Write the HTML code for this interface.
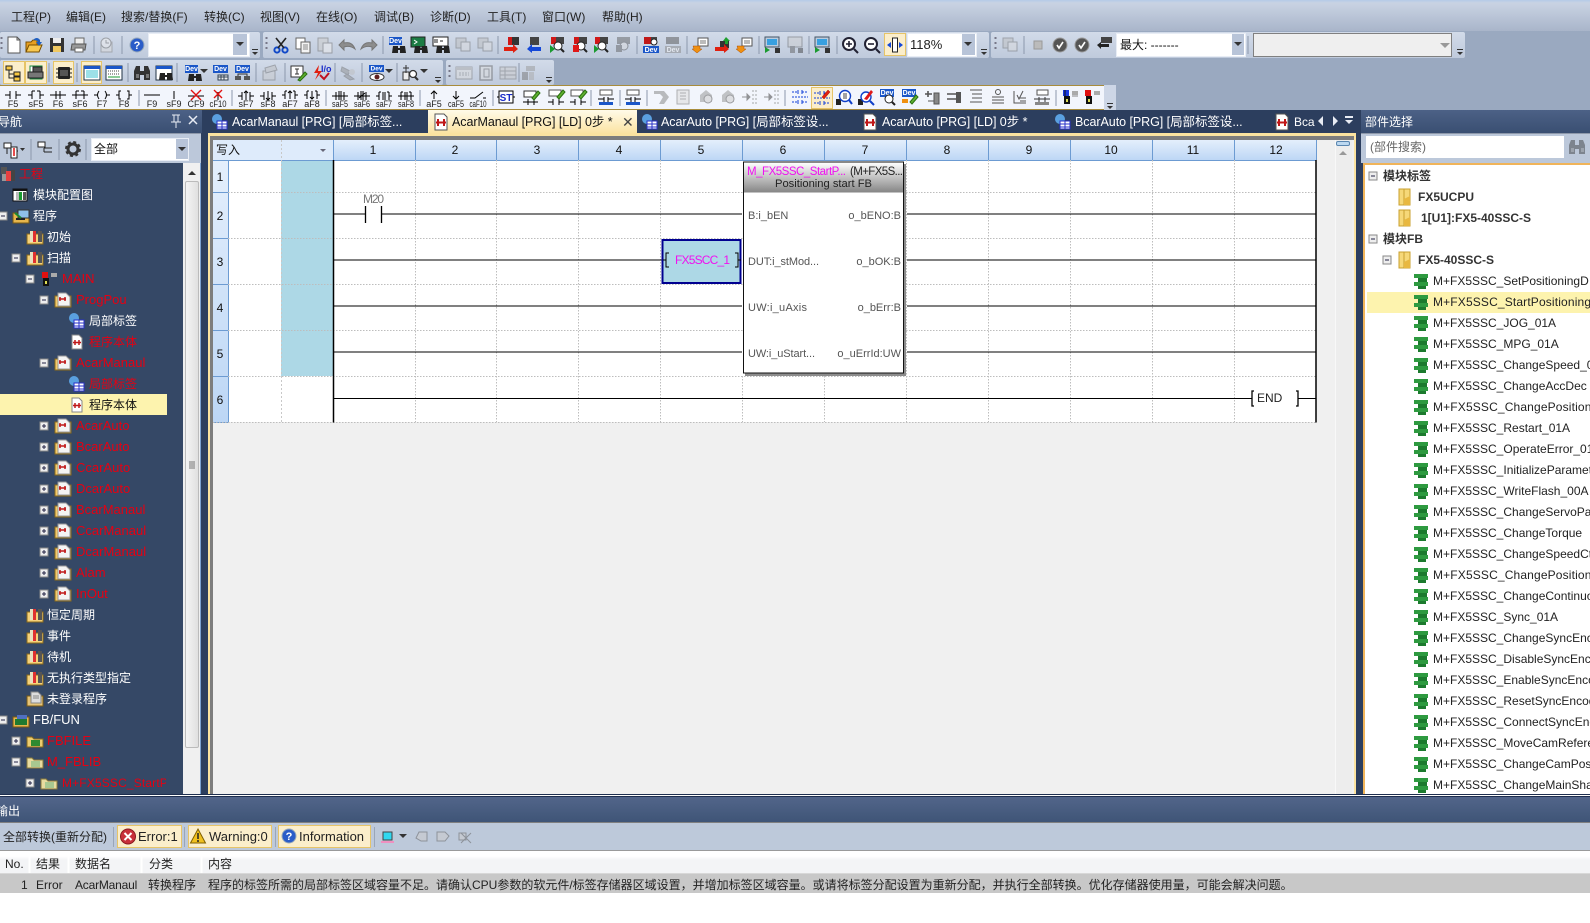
<!DOCTYPE html>
<html><head><meta charset="utf-8"><style>
html,body{margin:0;padding:0;width:1590px;height:923px;overflow:hidden;background:#9aa9c0}
body{position:relative;font:12px/16px "Liberation Sans","Noto Sans CJK SC",sans-serif;color:#111}
div{position:absolute;white-space:nowrap}
svg{position:absolute;left:0;top:0}
.m{top:9px;color:#222}
.band{background:linear-gradient(#d2dbe9,#bfcadc);border-radius:2px}
.combo{background:#fff;border:1px solid #e8edf5}
.arr{background:#b8c4d8}
.sel{background:#fbeecb;border:1px solid #e6c468;box-sizing:border-box}
.tab{top:114px;color:#fff;font-size:12.5px;letter-spacing:-.05px}
.t{color:#fff;font-size:12px}
.r{color:#e60012}
.la{font-size:13px}
.g{color:#222;font-size:12px;left:1433px}
.b{color:#333;font-weight:bold;font-size:12px}
.h{top:856px;color:#222}
.w{top:877px;color:#222}
text{font-family:"Liberation Sans","Noto Sans CJK SC",sans-serif}
.lb{font-size:9px;text-anchor:middle;fill:#222}
</style></head><body>
<!-- top chrome -->
<div style="left:0;top:0;width:1590px;height:31px;background:linear-gradient(#b5cbe8 0,#c9d3e3 3px,#a9b5ca 100%)"></div>
<div class="m" style="left:11px">工程(P)</div><div class="m" style="left:66px">编辑(E)</div><div class="m" style="left:121px">搜索/替换(F)</div><div class="m" style="left:204px">转换(C)</div><div class="m" style="left:260px">视图(V)</div><div class="m" style="left:316px">在线(O)</div><div class="m" style="left:374px">调试(B)</div><div class="m" style="left:430px">诊断(D)</div><div class="m" style="left:487px">工具(T)</div><div class="m" style="left:542px">窗口(W)</div><div class="m" style="left:602px">帮助(H)</div>
<!-- toolbar bands -->
<div class="band" style="left:0;top:32px;width:260px;height:26px"></div>
<div class="band" style="left:263px;top:32px;width:726px;height:26px"></div>
<div class="band" style="left:991px;top:32px;width:474px;height:26px"></div>
<div class="band" style="left:0;top:60px;width:443px;height:25px"></div>
<div class="band" style="left:446px;top:60px;width:108px;height:25px"></div>
<div class="combo" style="left:148px;top:33px;width:100px;height:22px"></div><div class="arr" style="left:233px;top:34px;width:14px;height:21px"></div>
<div class="combo" style="left:907px;top:33px;width:68px;height:22px;font-size:13px;line-height:22px;text-indent:2px;color:#222">118%</div><div class="arr" style="left:962px;top:34px;width:13px;height:21px"></div>
<div class="combo" style="left:1116px;top:33px;width:128px;height:22px;line-height:22px;text-indent:3px;color:#111">最大: -------</div><div class="arr" style="left:1232px;top:34px;width:12px;height:21px"></div>
<div style="left:1253px;top:33px;width:197px;height:22px;background:#efefef;border:1px solid #808080"></div>
<div style="left:0;top:85px;width:1115px;height:25px;background:#f2f5fc;border-top:1px solid #a88c3c;border-bottom:1px solid #a88c3c;box-sizing:border-box"></div>
<div style="left:1104px;top:85px;width:12px;height:25px;background:#cdd6e6"></div>
<!-- selected buttons -->
<div class="sel" style="left:3px;top:61px;width:22px;height:23px"></div><div class="sel" style="left:25px;top:61px;width:22px;height:23px"></div><div class="sel" style="left:53px;top:61px;width:21px;height:23px"></div><div class="sel" style="left:81px;top:61px;width:21px;height:23px"></div>
<div class="sel" style="left:884px;top:33px;width:22px;height:23px"></div><div class="sel" style="left:811px;top:87px;width:22px;height:22px"></div>
<!-- title strip -->
<div style="left:0;top:110px;width:1590px;height:685px;background:#2c3e5e"></div>
<div style="left:0;top:110px;width:202px;height:23px;background:linear-gradient(#4c6186,#3a4f72)"></div>
<div class="t" style="left:0;top:114px;width:22px;overflow:hidden;direction:rtl">导航</div>
<div style="left:1361px;top:110px;width:229px;height:23px;background:linear-gradient(#4c6186,#3a4f72)"></div>
<div class="t" style="left:1365px;top:114px">部件选择</div>
<!-- tabs -->
<div style="left:428px;top:110px;width:209px;height:24px;background:linear-gradient(#fffbe8,#fbe3a0)"></div>
<div class="tab" style="left:232px">AcarManaul [PRG] [局部标签...</div>
<div class="tab" style="left:452px;color:#111">AcarManaul [PRG] [LD] 0步 *</div>
<div class="tab" style="left:622px;color:#444;font-size:14px">✕</div>
<div class="tab" style="left:661px">AcarAuto [PRG] [局部标签设...</div>
<div class="tab" style="left:882px">AcarAuto [PRG] [LD] 0步 *</div>
<div class="tab" style="left:1075px">BcarAuto [PRG] [局部标签设...</div>
<div class="tab" style="left:1294px;font-size:12px">Bca</div>
<!-- left pane -->
<div style="left:0;top:133px;width:201px;height:30px;background:#bcc8da;border-top:1px solid #8d98aa;box-sizing:border-box"></div>
<div class="combo" style="left:91px;top:138px;width:96px;height:21px;line-height:21px;text-indent:2px">全部</div><div class="arr" style="left:176px;top:139px;width:12px;height:20px"></div>
<div style="left:0;top:163px;width:201px;height:632px;background:#354866"></div>
<div style="left:183px;top:163px;width:17px;height:632px;background:#f0f0f0;border-right:1px solid #7aa0d0"></div>
<div style="left:185px;top:181px;width:14px;height:567px;background:linear-gradient(90deg,#f4f4f4,#e0e0e0);border:1px solid #bbb;box-sizing:border-box;border-radius:2px"></div>
<div style="left:0;top:394px;width:167px;height:21px;background:#fdf3ae"></div>
<div style="left:0;top:1px">
<div class="t r" style="left:19px;top:165px">工程</div>
<div class="t" style="left:33px;top:186px">模块配置图</div>
<div class="t" style="left:33px;top:207px">程序</div>
<div class="t" style="left:47px;top:228px">初始</div>
<div class="t" style="left:47px;top:249px">扫描</div>
<div class="t r la" style="left:62px;top:270px">MAIN</div>
<div class="t r la" style="left:76px;top:291px">ProgPou</div>
<div class="t" style="left:89px;top:312px">局部标签</div>
<div class="t r" style="left:89px;top:333px">程序本体</div>
<div class="t r la" style="left:76px;top:354px">AcarManaul</div>
<div class="t r" style="left:89px;top:375px">局部标签</div>
<div class="t" style="left:89px;top:396px;color:#111">程序本体</div>
<div class="t r la" style="left:76px;top:417px">AcarAuto</div>
<div class="t r la" style="left:76px;top:438px">BcarAuto</div>
<div class="t r la" style="left:76px;top:459px">CcarAuto</div>
<div class="t r la" style="left:76px;top:480px">DcarAuto</div>
<div class="t r la" style="left:76px;top:501px">BcarManaul</div>
<div class="t r la" style="left:76px;top:522px">CcarManaul</div>
<div class="t r la" style="left:76px;top:543px">DcarManaul</div>
<div class="t r la" style="left:76px;top:564px">Alam</div>
<div class="t r la" style="left:76px;top:585px">InOut</div>
<div class="t" style="left:47px;top:606px">恒定周期</div>
<div class="t" style="left:47px;top:627px">事件</div>
<div class="t" style="left:47px;top:648px">待机</div>
<div class="t" style="left:47px;top:669px">无执行类型指定</div>
<div class="t" style="left:47px;top:690px">未登录程序</div>
<div class="t la" style="left:33px;top:711px">FB/FUN</div>
<div class="t r la" style="left:47px;top:732px">FBFILE</div>
<div class="t r la" style="left:47px;top:753px">M_FBLIB</div>
<div class="t r" style="left:62px;top:774px;width:104px;overflow:hidden;letter-spacing:.15px">M+FX5SSC_StartPositioning</div>
</div>
<!-- editor -->
<div style="left:208px;top:133px;width:1148px;height:662px;background:#f0f0f0;border-left:2px solid #fbe3a0;border-right:2px solid #fbe3a0;box-sizing:border-box"></div>
<div style="left:208px;top:133px;width:1148px;height:3px;background:#fbe3a0"></div>
<div style="left:210px;top:136px;width:1144px;height:4px;background:#7d7d7d"></div>
<div style="left:210px;top:136px;width:3px;height:659px;background:#7d7d7d"></div>
<div style="left:1335px;top:140px;width:16px;height:655px;background:#ededed;border-left:1px solid #f8f8f8"></div>
<div style="left:1336px;top:141px;width:14px;height:5px;background:#bcd8f0;border:1px solid #5a86b0;border-radius:2px;box-sizing:border-box"></div>
<div style="left:213px;top:140px;width:1103px;height:282px;background:#fff"></div>
<div style="left:281px;top:160px;width:52px;height:216px;background:#add8e6"></div>
<svg width="1590" height="923" viewBox="0 0 1590 923">
<defs>
<linearGradient id="hg" x1="0" y1="0" x2="0" y2="1"><stop offset="0" stop-color="#e4effc"/><stop offset="1" stop-color="#bcd6f5"/></linearGradient>
<linearGradient id="fg" x1="0" y1="0" x2="0" y2="1"><stop offset="0" stop-color="#fff"/><stop offset="1" stop-color="#858585"/></linearGradient>
<!-- toolbar icons -->
<g id="doc"><path d="M-6-8H3L6-5V8H-6Z" fill="#fff" stroke="#555"/><path d="M3-8V-5H6" fill="none" stroke="#555"/></g>
<g id="open"><path d="M-8 7V-3H-3L-1-5H3V7Z" fill="#e8a020" stroke="#7a5000"/><path d="M-8 7L-5 0H8L5 7Z" fill="#f8c850" stroke="#7a5000"/><path d="M-1-5Q3-9 6-5V-3H8L5 1 2-3H4Q3-5-1-5Z" fill="#1f5fc0"/></g>
<g id="save"><rect x="-7" y="-7" width="14" height="14" fill="#333"/><rect x="-4" y="-7" width="8" height="5" fill="#eee"/><rect x="-4" y="1" width="8" height="6" fill="#f0c860"/></g>
<g id="print"><rect x="-4" y="-7" width="9" height="6" fill="#eee" stroke="#666"/><path d="M-7-1H7L6 5H-8Z" fill="#999" stroke="#555"/><rect x="-4" y="3" width="8" height="4" fill="#fff" stroke="#666"/></g>
<g id="clk" opacity=".55"><rect x="-6" y="-3" width="11" height="10" fill="#ddd" stroke="#888"/><circle cx="-1" cy="-2" r="5" fill="#eee" stroke="#777"/><path d="M-1-5V-2H2" fill="none" stroke="#777"/></g>
<g id="help"><circle r="7" fill="#2a5cc8" stroke="#9ab"/><text y="4" text-anchor="middle" font-size="11" font-weight="bold" fill="#fff">?</text></g>
<g id="cut"><circle cx="-4" cy="5" r="2.6" fill="none" stroke="#1048c8" stroke-width="2"/><circle cx="4" cy="5" r="2.6" fill="none" stroke="#1048c8" stroke-width="2"/><path d="M-5-7L3 3M5-7L-3 3" stroke="#222" stroke-width="1.6"/></g>
<g id="copy"><rect x="-7" y="-7" width="9" height="11" fill="#fff" stroke="#666"/><rect x="-2" y="-3" width="9" height="11" fill="#f4f4f4" stroke="#666"/><path d="M0 0H5M0 2H5M0 4H5" stroke="#888"/></g>
<g id="paste" opacity=".55"><rect x="-7" y="-7" width="10" height="13" fill="#ccc" stroke="#777"/><rect x="-2" y="-2" width="9" height="10" fill="#eee" stroke="#777"/></g>
<g id="undo"><path d="M-8 0L-3-5V-2Q5-4 8 4Q3 0-3 2V5Z" fill="#8d8d8d" stroke="#777"/></g>
<g id="redo"><path d="M8 0L3-5V-2Q-5-4-8 4Q-3 0 3 2V5Z" fill="#8d8d8d" stroke="#777"/></g>
<g id="bino"><path d="M-6-2H-1V5H-7ZM1-2H6L7 5H1Z" fill="#222"/><rect x="-1" y="0" width="2" height="2" fill="#222"/></g>
<g id="devb"><rect x="-8" y="-8" width="13" height="8" fill="#1a56c8"/><text x="-1.5" y="-2" text-anchor="middle" font-size="7" font-weight="bold" fill="#fff">Dev</text><use href="#bino" x="2" y="3"/></g>
<g id="term"><rect x="-8" y="-8" width="14" height="10" fill="#1c7c44" stroke="#222"/><path d="M-5-5L-2-3-5-1" fill="none" stroke="#fff"/><use href="#bino" x="2" y="3"/></g>
<g id="io"><rect x="-8" y="-8" width="15" height="9" fill="#fff" stroke="#222"/><path d="M-6-6V-2M-4-6V-2M-1-4H2" stroke="#222"/><use href="#bino" x="2" y="3"/></g>
<g id="g2" opacity=".45"><rect x="-7" y="-7" width="10" height="10" fill="#bbb" stroke="#666"/><rect x="-2" y="-3" width="9" height="9" fill="#ddd" stroke="#666"/></g>
<g id="rarr"><rect x="-2" y="-8" width="9" height="8" fill="#333"/><rect x="-4" y="-8" width="4" height="8" fill="#d01818"/><path d="M-8 2H1V-1L6 4 1 8V6H-8Z" fill="#e02010"/></g>
<g id="barr"><rect x="-4" y="-8" width="9" height="8" fill="#444"/><path d="M7 2H-2V-1L-7 4-2 8V6H7Z" fill="#1448d8"/></g>
<g id="rsc"><rect x="-6" y="-8" width="13" height="7" fill="#444"/><rect x="-6" y="-8" width="5" height="7" fill="#d01818"/><circle cx="1" cy="1" r="4" fill="#fff" stroke="#222"/><path d="M4 4L7 7" stroke="#222" stroke-width="2"/><path d="M-7 0L-2 4-7 8Z" fill="#1a9a30"/></g>
<g id="rsr"><rect x="-6" y="-8" width="13" height="7" fill="#444"/><rect x="-6" y="-8" width="5" height="7" fill="#d01818"/><circle cx="1" cy="1" r="4" fill="#fff" stroke="#222"/><path d="M4 4L7 7" stroke="#222" stroke-width="2"/><rect x="-7" y="0" width="6" height="7" fill="#e01818"/></g>
<g id="rsg" opacity=".45"><rect x="-6" y="-8" width="13" height="7" fill="#555"/><circle cx="1" cy="1" r="4" fill="#ddd" stroke="#444"/><rect x="-7" y="0" width="6" height="7" fill="#555"/></g>
<g id="dvr"><rect x="-7" y="-8" width="7" height="7" fill="#c01818"/><rect x="0" y="-8" width="6" height="7" fill="#444"/><circle cx="3" cy="-3" r="3" fill="#fff" stroke="#222"/><rect x="-8" y="1" width="16" height="7" fill="#1a56c8"/><text y="7" text-anchor="middle" font-size="7" font-weight="bold" fill="#fff">Dev</text></g>
<g id="dvg" opacity=".5"><rect x="-7" y="-8" width="13" height="7" fill="#555"/><rect x="-8" y="1" width="16" height="7" fill="#888"/><text y="7" text-anchor="middle" font-size="7" font-weight="bold" fill="#fff">Dev</text></g>
<g id="wr1"><path d="M-3-7H7V1H-3Z" fill="#fff" stroke="#555"/><path d="M-1-4H5M-1-2H5" stroke="#777"/><path d="M-8 1H-1V4H1L-4 8-9 4H-7Z" fill="#f09010" stroke="#b05000" stroke-width=".5"/></g>
<g id="wr2"><rect x="-3" y="-4" width="9" height="7" fill="#333"/><path d="M3-8L7-4H5V-1H2V-4H0Z" fill="#20a030"/><path d="M-8 2H1V-1L6 4 1 8V6H-8Z" fill="#e02010"/></g>
<g id="mon"><rect x="-7" y="-8" width="14" height="10" fill="#bcd" stroke="#456"/><rect x="-5" y="-6" width="10" height="6" fill="#38a0e0"/><path d="M-7 2L-2 5-7 8Z" fill="#1a9a30"/><rect x="3" y="3" width="5" height="5" fill="#333"/></g>
<g id="mong" opacity=".45"><rect x="-7" y="-8" width="14" height="10" fill="#ccc" stroke="#555"/><rect x="-5" y="1" width="5" height="7" fill="#555"/><rect x="3" y="3" width="5" height="5" fill="#333"/></g>
<g id="zin"><circle cx="-1" cy="-1" r="6" fill="#fff" stroke="#223" stroke-width="2"/><path d="M-4-1H2M-1-4V2" stroke="#223" stroke-width="1.6"/><path d="M4 4L8 8" stroke="#223" stroke-width="2"/></g>
<g id="zou"><circle cx="-1" cy="-1" r="6" fill="#fff" stroke="#223" stroke-width="2"/><path d="M-4-1H2" stroke="#223" stroke-width="1.6"/><path d="M4 4L8 8" stroke="#223" stroke-width="2"/></g>
<g id="fit"><rect x="-2.500" y="-7" width="5" height="14" fill="#fff" stroke="#222"/><path d="M-8 0L-4-3V3ZM8 0L4-3V3Z" fill="#1448d8"/></g>
<g id="sq"><rect x="-4" y="-4" width="8" height="8" fill="#bbb" stroke="#999"/></g>
<g id="chk"><circle r="7" fill="#555" stroke="#999"/><path d="M-3 0L-1 3 3-3" fill="none" stroke="#fff" stroke-width="1.6"/></g>
<g id="ret"><rect x="-3" y="-8" width="11" height="6" fill="#444"/><path d="M-1-1H5V2H-3V4L-7 0-3-3V-1Z" fill="#222"/></g>
<g id="chev"><rect x="-3" y="-1" width="6" height="1" fill="#333"/><path d="M-3 2H3L0 5Z" fill="#333"/></g>
<g id="drop"><path d="M-4-2H4L0 2Z" fill="#333"/></g>
<g id="grip"><rect x="-.5" y="-8" width="2" height="2" fill="#778"/><rect x="-.5" y="-3" width="2" height="2" fill="#778"/><rect x="-.5" y="2" width="2" height="2" fill="#778"/></g>
<!-- row 2 -->
<g id="tr"><rect x="-8" y="-7" width="6" height="4" fill="#f8c840" stroke="#222"/><path d="M-5-3V5H0M-5 1H0" stroke="#222" fill="none"/><rect x="0" y="-1" width="6" height="4" fill="#f8c840" stroke="#222"/><rect x="0" y="4" width="6" height="4" fill="#f8c840" stroke="#222"/></g>
<g id="pr"><rect x="-6" y="-7" width="12" height="13" fill="#fff" stroke="#1a8a40"/><rect x="-3" y="-6" width="9" height="6" fill="#555" stroke="#222"/><rect x="-8" y="-1" width="15" height="6" fill="#777" stroke="#222"/></g>
<g id="chip"><rect x="-6" y="-6" width="12" height="12" rx="1" fill="#222"/><path d="M-8-4H8M-8 0H8M-8 4H8" stroke="#222" stroke-dasharray="2 12"/><rect x="-4" y="-3" width="8" height="6" fill="#555"/></g>
<g id="wn"><rect x="-8" y="-7" width="16" height="14" fill="#fff" stroke="#234"/><rect x="-8" y="-7" width="16" height="3" fill="#1a56c8"/><path d="M-6-2H6M-6 0H6M-6 2H6M-6 4H6" stroke="#3ac0d0"/></g>
<g id="wn2"><rect x="-8" y="-7" width="16" height="14" fill="#fff" stroke="#234"/><rect x="-8" y="-7" width="16" height="3" fill="#1a56c8"/><path d="M-6-2H6M-6 1H6" stroke="#444" stroke-dasharray="1 1"/><path d="M-6 4H6" stroke="#1a9a30"/></g>
<g id="bb"><path d="M-8-2L-6-7H-2V-2H2V-7H6L8-2V7H2V2H-2V7H-8Z" fill="#333"/><rect x="-6" y="1" width="3" height="4" fill="#777"/><rect x="4" y="1" width="3" height="4" fill="#777"/></g>
<g id="wb"><rect x="-8" y="-7" width="16" height="14" fill="#fff" stroke="#234"/><rect x="-8" y="-7" width="16" height="3" fill="#1a56c8"/><use href="#bino" x="2" y="2"/></g>
<g id="dt"><rect x="-8" y="-8" width="15" height="8" fill="#1a56c8"/><text x="-.5" y="-2" text-anchor="middle" font-size="7" font-weight="bold" fill="#fff">Dev</text><path d="M-3 2H7V7H-3Z" fill="#eee" stroke="#345"/><path d="M-3 4H7M0 2V7M3 2V7" stroke="#345"/></g>
<g id="dn"><rect x="-8" y="-8" width="15" height="8" fill="#1a56c8"/><text x="-.5" y="-2" text-anchor="middle" font-size="7" font-weight="bold" fill="#fff">Dev</text><rect x="-8" y="3" width="6" height="4" fill="#555"/><rect x="1" y="3" width="6" height="4" fill="#555"/><path d="M-5 3V1H4V3" stroke="#333" fill="none"/></g>
<g id="gtb" opacity=".45"><rect x="-7" y="-2" width="12" height="9" fill="#ccc" stroke="#666"/><path d="M-5-5L5-8 7-3-4 0Z" fill="#bbb" stroke="#666"/></g>
<g id="ep"><rect x="-7" y="-7" width="12" height="11" fill="#fff" stroke="#333"/><path d="M-3-4H1M-1-4V1M-3 1H1" stroke="#333"/><path d="M0 7L7-1 9 1 2 8Z" fill="#60b030" stroke="#2a7010"/></g>
<g id="ioc"><text x="0" y="-1" font-size="9" font-weight="bold" fill="#1a2cc8">I/o</text><path d="M-2-8L-7 0H-3L-6 7 1-2H-3Z" fill="#e02010"/><path d="M-1 2L3 6 8 0" fill="none" stroke="#c01020" stroke-width="2"/></g>
<g id="gwr" opacity=".45"><path d="M-6-6L2-2 0 2-7-2ZM-1 1L6 6 2 7-4 3Z" fill="#888" stroke="#666"/><circle cx="4" cy="-1" r="3" fill="#bbb"/></g>
<g id="eye"><rect x="-8" y="-8" width="15" height="7" fill="#1a56c8"/><text x="-.5" y="-2.500" text-anchor="middle" font-size="6.500" font-weight="bold" fill="#fff">Dev</text><ellipse cy="4" rx="7" ry="3.500" fill="#fff" stroke="#333"/><circle cy="4" r="2.500" fill="#602020"/></g>
<g id="zq"><rect x="-7" y="-1" width="6" height="8" fill="#eee" stroke="#333"/><path d="M-4-8V0M-7-5H-1" stroke="#333"/><circle cx="3" cy="1" r="3.500" fill="#fff" stroke="#333" stroke-width="1.300"/><path d="M5 4L8 7" stroke="#333" stroke-width="2"/></g>
<g id="gt" opacity=".5"><rect x="-8" y="-6" width="16" height="12" fill="#ddd" stroke="#777"/><rect x="-8" y="-6" width="16" height="3" fill="#aaa"/><path d="M-5 0H5M-5 2H5" stroke="#888" stroke-dasharray="2 1"/></g>
<g id="gc" opacity=".5"><rect x="-6" y="-7" width="12" height="14" fill="#ddd" stroke="#666" stroke-width="1.500"/><rect x="-2" y="-4" width="5" height="8" fill="none" stroke="#666"/></g>
<g id="gk" opacity=".5"><rect x="-8" y="-6" width="16" height="12" fill="#ccc" stroke="#777"/><path d="M-8-2H8M-8 2H8M-3-6V6" stroke="#777"/></g>
<g id="gm" opacity=".5"><rect x="-7" y="-1" width="6" height="8" fill="#777"/><rect x="0" y="-1" width="5" height="8" fill="#aaa"/><path d="M-3-7H6V-2H-3Z" fill="#999"/></g>
<!-- ladder -->
<g id="k1" fill="none" stroke="#000"><path d="M-8 0H-3M-3-4V4M3-4V4M3 0H8"/></g>
<g id="k2" fill="none" stroke="#000"><path d="M-8 0H-4M-4-4V4M-4-4H-1M1-4H4M4-4V4M4 0H8"/></g>
<g id="k3" fill="none" stroke="#000"><path d="M-8 0H8M-2-4V4M2-4V4"/></g>
<g id="k4" fill="none" stroke="#000"><path d="M-8 0H8M-4-4V4M-4-4H-1M1-4H4M4-4V4"/></g>
<g id="k5" fill="none" stroke="#000"><path d="M-8 0H-4M-3-4Q-6 0-3 4M3-4Q6 0 3 4M4 0H8"/></g>
<g id="k6" fill="none" stroke="#000"><path d="M-8 0H-5M-3-4H-5V4H-3M3-4H5V4H3M5 0H8"/></g>
<g id="k7" fill="none" stroke="#000"><path d="M-8 0H8"/></g>
<g id="k8" fill="none" stroke="#000"><path d="M0-4V4"/></g>
<g id="k9" fill="none"><path d="M-8 1H8" stroke="#000"/><path d="M-5-5L5 5M5-5L-5 5" stroke="#e01010" stroke-width="1.400"/></g>
<g id="k10" fill="none"><path d="M0-3V5" stroke="#000"/><path d="M-4-5L4 3M4-5L-4 3" stroke="#e01010" stroke-width="1.400"/></g>
<g id="k11" fill="none" stroke="#000"><path d="M-8 1H-4M-4-3V5M4-3V5M4 1H8M0-4V5M-2-2L0-4 2-2"/></g>
<g id="k12" fill="none" stroke="#000"><path d="M-8 1H-4M-4-3V5M4-3V5M4 1H8M0-4V5M-2 3L0 5 2 3"/></g>
<g id="k13" fill="none" stroke="#000"><path d="M-8 0H-5M-5-4V4M-5-4H-3M3-4H5M5-4V4M5 0H8M0-4V4M-2-2L0-4 2-2"/></g>
<g id="k14" fill="none" stroke="#000"><path d="M-8 0H-5M-5-4V4M-5-4H-3M3-4H5M5-4V4M5 0H8M0-4V4M-2 2L0 4 2 2"/></g>
<g id="k15" fill="none" stroke="#000"><path d="M-8 1H8M-4-3V5M4-3V5M-1-4V5M1-4V5"/></g>
<g id="k16" fill="none" stroke="#000"><path d="M-8 1H8M-4-3V5M4-3V5M-3 3L3-2M-1-4V5M1-4V5"/></g>
<g id="k17" fill="none" stroke="#000"><path d="M-8 1H-5M-5-3V5M-5-3H-3M3-3H5M5-3V5M5 1H8M-1-3V5M1-3V5"/></g>
<g id="k18" fill="none" stroke="#000"><path d="M-8 1H8M-5-3V5M-5-3H-3M3-3H5M5-3V5M-1-3V5M1-3V5"/></g>
<g id="k19" fill="none" stroke="#000"><path d="M-3-1L0-4 3-1M0-4V4"/></g>
<g id="k20" fill="none" stroke="#000"><path d="M-3 1L0 4 3 1M0-4V4"/></g>
<g id="k21" fill="none" stroke="#000"><path d="M-8 3H-3L5-3M5 3H8"/></g>
<g id="st"><path d="M-9 0H-7M7 0H9" stroke="#000"/><rect x="-7" y="-6" width="14" height="12" fill="#fff" stroke="#000"/><text y="4" text-anchor="middle" font-size="10" font-weight="bold" fill="#1a2cc8">ST</text></g>
<g id="pen"><path d="M-8 5H7M-3 2V8M3 2V8" stroke="#000" fill="none"/><path d="M-7-6H5V0H-7Z" fill="#fff" stroke="#333"/><path d="M1 1L7-6 9-4 3 3Z" fill="#60b030" stroke="#2a7010"/></g>
<g id="pen2"><path d="M-8 5H-3M-3 2V8M3 2V8M3 5H8" stroke="#000" fill="none"/><path d="M-7-7H5V-1H-7Z" fill="#fff" stroke="#555"/><path d="M1 0L7-7 9-5 3 2Z" fill="#60b030" stroke="#2a7010"/></g>
<g id="pen3"><path d="M-8 2H-2M2 2H8M-2 0V5M2 0V5" stroke="#000" fill="none"/><path d="M-6-7H6V-2H-6Z" fill="#fff" stroke="#555"/><path d="M-7 5H7V8H-7Z" fill="#1a56c8"/></g>
<g id="gp" opacity=".55"><path d="M-8-6H2L7 0 2 7H-3L1 0-2-3H-8Z" fill="#888"/></g>
<g id="gd" opacity=".55"><rect x="-7" y="-7" width="12" height="14" fill="#ddd" stroke="#777"/><path d="M-4-4H2M-4-1H2M-4 2H2" stroke="#777"/></g>
<g id="gs" opacity=".55"><path d="M-6-2L0-7 6-2V5H-6Z" fill="#999"/><circle cx="2" cy="2" r="4" fill="#ccc" stroke="#555"/></g>
<g id="gl" opacity=".55"><path d="M-8 0H-3M-3-3L0 0-3 3Z" stroke="#444" fill="#444"/><path d="M2-6H8M2-2H8M2 2H8M2 6H8" stroke="#666" stroke-dasharray="2 1"/></g>
<g id="bl"><path d="M-8-4H-2M2-4H8M-8 1H8M-8 6H-2M2 6H8" stroke="#1040d8" stroke-dasharray="2 1"/><path d="M-2-6V-2M2-6V-2M-2 4V8M2 4V8" stroke="#1040d8"/></g>
<g id="blp"><use href="#bl"/><path d="M0 0L6-7 8-5 2 2Z" fill="#e02010" stroke="#a01000" stroke-width=".5"/></g>
<g id="sr1"><rect x="-8" y="2" width="5" height="6" fill="#222"/><circle cx="1" cy="-1" r="5.500" fill="#fff" stroke="#1040c8" stroke-width="1.400"/><path d="M-1-3H3M-1-1H3M-1 1H3" stroke="#444"/><path d="M5 3L8 7" stroke="#1040c8" stroke-width="2"/></g>
<g id="sr2"><rect x="-8" y="2" width="5" height="6" fill="#222"/><circle cx="0" cy="0" r="5" fill="#fff" stroke="#1040c8" stroke-width="1.400"/><path d="M-2 2L5-7 7-5 1 3Z" fill="#e01818"/><path d="M4 4L8 8" stroke="#1040c8" stroke-width="2"/></g>
<g id="dz"><rect x="-8" y="-8" width="14" height="8" fill="#1a56c8"/><text x="-1" y="-2" text-anchor="middle" font-size="7" font-weight="bold" fill="#fff">Dev</text><circle cx="1" cy="2" r="4" fill="#fff" stroke="#222"/><path d="M4 5L7 8" stroke="#222" stroke-width="2"/></g>
<g id="dp"><rect x="-8" y="-8" width="14" height="8" fill="#1a56c8"/><text x="-1" y="-2" text-anchor="middle" font-size="7" font-weight="bold" fill="#fff">Dev</text><path d="M-8 2H-2V6H-8Z" fill="#f09010"/><path d="M0 5L6-2 8 0 2 7Z" fill="#60b030" stroke="#2a7010"/></g>
<g id="ga"><path d="M-7-3H0M-4-6V0" stroke="#555" stroke-width="1.600"/><rect x="2" y="-4" width="5" height="11" fill="#888" stroke="#555"/><path d="M-4 4H2" stroke="#555"/></g>
<g id="gb"><path d="M-7-3H2M-7 2H2" stroke="#555" stroke-width="1.600"/><rect x="2" y="-5" width="5" height="11" fill="#555"/></g>
<g id="gc2"><path d="M-6-7H6M-4-3H6M-4 1H6M-6 5H6" stroke="#555"/></g>
<g id="gd2"><circle cx="0" cy="-5" r="2.500" fill="none" stroke="#555"/><path d="M-6 0H6M-6 3H6M-6 6H6" stroke="#555"/></g>
<g id="ge"><path d="M-6-6V6H6M-3-2L-1 2 3-6" fill="none" stroke="#555"/><path d="M0 1H6M0 4H6" stroke="#555"/></g>
<g id="gf"><path d="M-5-7H6V-2H-5Z" fill="#fff" stroke="#555"/><path d="M-8 2H8M-3 0V5M3 0V5" stroke="#333"/><path d="M-7 5H7V8H-7Z" fill="#888"/></g>
<g id="pc1"><rect x="-7" y="-7" width="6" height="6" fill="#1838e0"/><path d="M-5-7V-1" stroke="#111"/><rect x="-6" y="-1" width="6" height="8" fill="#111"/><rect x="-4" y="2" width="2" height="3" fill="#dd5"/><path d="M2-6H8V-2H2Z" fill="#aaa"/><path d="M2-1H8" stroke="#888"/></g>
<g id="pc2"><rect x="-7" y="-7" width="6" height="6" fill="#e01010"/><rect x="-6" y="-1" width="6" height="8" fill="#111"/><rect x="-4" y="2" width="2" height="3" fill="#dd5"/><path d="M2-6H8V-2H2Z" fill="#aaa"/></g>
<!-- tree icons -->
<g id="mn"><rect x="-4" y="-4" width="8" height="8" fill="#eee" stroke="#888"/><path d="M-2 0H2" stroke="#224"/></g>
<g id="pl"><rect x="-4" y="-4" width="8" height="8" fill="#eee" stroke="#888"/><path d="M-2 0H2M0-2V2" stroke="#224"/></g>
<g id="bk"><path d="M-8 7V-3H8V7Z" fill="#f5d27a" stroke="#8a6a1a"/><rect x="-5" y="-6" width="3" height="11" fill="#e8e0c0"/><rect x="-2" y="-6" width="3" height="11" fill="#e03030"/><rect x="3" y="-6" width="4" height="11" fill="#555"/></g>
<g id="pf"><path d="M-8 7V-4H8V7Z" fill="#f3cb6c" stroke="#8a6a1a"/><path d="M-5-7H3L7-3V6H-5Z" fill="#f4f4f4" stroke="#999"/><path d="M-3-3V1M2-3V1M-4-1H3" stroke="#c01818" stroke-width="1.500"/></g>
<g id="lb"><circle cx="-3" cy="-3" r="5" fill="#5aa0e0"/><rect x="-3" y="-1" width="10" height="8" fill="#fff" stroke="#2830c8"/><path d="M-3 2H7M-3 5H7M2-1V7" stroke="#2830c8"/></g>
<g id="pd"><path d="M-5-7H2L5-4V7H-5Z" fill="#fff" stroke="#888"/><path d="M-2-2V3M2-2V3M-4 .5H4" stroke="#c01818" stroke-width="1.500"/></g>
<g id="prj"><rect x="-7" y="-7" width="6" height="7" fill="#555"/><rect x="-2" y="-3" width="5" height="10" fill="#e84040"/><rect x="3" y="-4" width="4" height="11" fill="#444"/><rect x="-6" y="0" width="4" height="7" fill="#999"/></g>
<g id="mod"><rect x="-7" y="-6" width="14" height="12" fill="#fff" stroke="#111"/><rect x="-7" y="-6" width="14" height="2" fill="#111"/><rect x="-4" y="-3" width="3" height="8" fill="#bbb"/><rect x="-1" y="-3" width="3" height="8" fill="#1a9a30"/><rect x="3" y="-3" width="3" height="8" fill="#555"/></g>
<g id="pgf"><path d="M-8 7V-3H8V7Z" fill="#e6b64c" stroke="#7a5a12"/><rect x="-3" y="-6" width="11" height="8" fill="#8fc0e8" stroke="#333"/><path d="M-5 3H4" stroke="#222" stroke-width="2"/><path d="M-6-3L0 2" stroke="#1a8a30" stroke-width="2"/></g>
<g id="ufl"><path d="M-8 7V-3H8V7Z" fill="#e6c478" stroke="#7a5a12"/><path d="M-4-7H3L6-4V4H-4Z" fill="#ddd" stroke="#888"/><path d="M-2-3H4M-2-1H4" stroke="#888"/></g>
<g id="fbf"><path d="M-8 7V-3H8V7Z" fill="#e6b64c" stroke="#7a5a12"/><rect x="-4" y="-5" width="10" height="4" fill="#5070c0"/><path d="M-6-1H6V5H-6Z" fill="#1e7a30"/></g>
<g id="ffl"><path d="M-8 6V-4H-3L-1-2H8V6Z" fill="#eccd70" stroke="#8a6a1a"/><rect x="-4" y="-1" width="9" height="6" fill="#2e8a30"/></g>
<g id="ffg"><path d="M-8 6V-4H-3L-1-2H8V6Z" fill="#e8dca0" stroke="#8a7a3a"/><rect x="-4" y="-1" width="9" height="6" fill="#a8c890"/></g>
<g id="gr"><path d="M-7-7H7V-3H-7Z" fill="#2e9a40"/><path d="M-3-3H6V1H-3Z" fill="#1c7a2e"/><path d="M-7 1H7V5H-7Z" fill="#2e9a40"/><path d="M-3 5H5V8H-3Z" fill="#1c7a2e"/></g>
<g id="yf"><path d="M-6-8H5V8H-6Z" fill="#f6d878" stroke="#c8a030"/><path d="M-1-8V8" stroke="#c8a030"/><path d="M-1 2L5-1V8H-1Z" fill="#e8b840"/></g>
<g id="tabp"><path d="M-6-8H3L6-5V8H-6Z" fill="#fff" stroke="#555"/><path d="M-3-3V4M3-3V4M-5 .5H5" stroke="#c01818" stroke-width="2"/></g>
</defs>

<!-- grid headers -->
<rect x="213" y="140" width="120" height="20.500" fill="#deebfb"/>
<rect x="333" y="140" width="983" height="20.500" fill="url(#hg)"/>
<rect x="213" y="160" width="15" height="262" fill="url(#hg)"/>
<g stroke="#6c9bd2" fill="none">
<path d="M213 160.500H1316.500M1316.500 140V160M228.500 160V422M213 192.500H228M213 238.500H228M213 284.500H228M213 330.500H228M213 376.500H228M213 422.500H228"/>
<path d="M333.500 140V160M415.500 140V160M496.500 140V160M578.500 140V160M660.500 140V160M742.500 140V160M824.500 140V160M906.500 140V160M988.500 140V160M1070.500 140V160M1152.500 140V160M1234.500 140V160"/>
</g>
<path d="M281.500 140V422" stroke="#c8c8c8" stroke-dasharray="2 2"/>
<g stroke="#bdbdbd" stroke-dasharray="1.500 1.500">
<path d="M228 192.500H1316M228 238.500H1316M228 284.500H1316M228 330.500H1316M228 376.500H1316M213 422.500H1316"/>
<path d="M415.500 160V422M496.500 160V422M578.500 160V422M660.500 160V422M742.500 376V422M824.500 376V422M906.500 160V422M988.500 160V422M1070.500 160V422M1152.500 160V422M1234.500 160V422"/>
</g>
<g font-size="12" text-anchor="middle" fill="#111">
<text x="373" y="154">1</text><text x="455" y="154">2</text><text x="537" y="154">3</text><text x="619" y="154">4</text><text x="701" y="154">5</text><text x="783" y="154">6</text><text x="865" y="154">7</text><text x="947" y="154">8</text><text x="1029" y="154">9</text><text x="1111" y="154">10</text><text x="1193" y="154">11</text><text x="1276" y="154">12</text>
<text x="220" y="181">1</text><text x="220" y="220">2</text><text x="220" y="266">3</text><text x="220" y="312">4</text><text x="220" y="358">5</text><text x="220" y="404">6</text>
</g>
<text x="216" y="154" font-size="12" fill="#111">写入</text>
<path d="M320 149H326L323 152Z" fill="#667"/>
<!-- ladder -->
<g stroke="#000" fill="none" stroke-width="1">
<path d="M333.500 160V422.500M1316 160V422.500" stroke-width="1.500"/>
<path d="M333 214H365M381 214H742M907 214H1316M333 260H662M907 260H1316M333 306H742M907 306H1316M333 352H742M907 352H1316M333 398.500H1252M1298 398.500H1316"/>
<path d="M365.500 206V223M381.500 206V223" stroke-width="1.300"/>
<path d="M1254 391H1252V406H1254M1296 391H1298V406H1296" stroke-width="1.300"/>
</g>
<text x="1257" y="402" font-size="12" fill="#222">END</text>
<text x="363" y="203" font-size="12" fill="#777" textLength="21">M20</text>
<!-- FB cell -->
<rect x="662.500" y="240" width="78" height="43" fill="#add8e6" stroke="#000090" stroke-width="2"/>
<path d="M663 260H666M669 253H666V267H669M735 253H738V267H735M738 260H741" fill="none" stroke="#000"/>
<text x="675" y="264" font-size="12" fill="#f010f0" textLength="55">FX5SCC_1</text>
<rect x="745" y="164" width="161" height="212" fill="#8c8c8c"/>
<rect x="743.500" y="162" width="160" height="211" fill="#fff" stroke="#111"/>
<rect x="744" y="162.500" width="159" height="30" fill="url(#fg)"/>
<text x="747" y="175" font-size="11.500" fill="#f010f0" textLength="99">M_FX5SSC_StartP...</text>
<text x="850" y="175" font-size="11.500" fill="#222" textLength="53">(M+FX5S...</text>
<text x="823.500" y="187" font-size="11.200" fill="#222" text-anchor="middle">Positioning start FB</text>
<g font-size="11" fill="#555">
<text x="748" y="219">B:i_bEN</text><text x="748" y="265" textLength="71">DUT:i_stMod...</text><text x="748" y="311" textLength="59">UW:i_uAxis</text><text x="748" y="357" textLength="67">UW:i_uStart...</text>
<g text-anchor="end"><text x="901" y="219">o_bENO:B</text><text x="901" y="265">o_bOK:B</text><text x="901" y="311">o_bErr:B</text><text x="901" y="357">o_uErrId:UW</text></g>
</g>
<path d="M1339 155H1347L1343 151Z" fill="#999"/>

<!-- row 1 icons -->
<g>
<use href="#grip" x="1" y="45"/><use href="#doc" x="14" y="45"/><use href="#open" x="34" y="45"/><use href="#save" x="57" y="45"/><use href="#print" x="79" y="45"/><use href="#clk" x="107" y="45"/><use href="#help" x="137" y="45"/><use href="#drop" x="240" y="44"/><use href="#chev" x="255" y="50"/>
<use href="#grip" x="266" y="45"/><use href="#cut" x="281" y="45"/><use href="#copy" x="303" y="45"/><use href="#paste" x="325" y="45"/><use href="#undo" x="347" y="45"/><use href="#redo" x="369" y="45"/>
<use href="#devb" x="397" y="45"/><use href="#term" x="419" y="45"/><use href="#io" x="441" y="45"/><use href="#g2" x="463" y="45"/><use href="#g2" x="485" y="45"/>
<use href="#rarr" x="512" y="45"/><use href="#barr" x="534" y="45"/><use href="#rsc" x="557" y="45"/><use href="#rsr" x="580" y="45"/><use href="#rsc" x="601" y="45"/><use href="#rsg" x="623" y="45"/>
<use href="#dvr" x="651" y="45"/><use href="#dvg" x="673" y="45"/><use href="#wr1" x="701" y="45"/><use href="#wr2" x="723" y="45"/><use href="#wr1" x="745" y="45"/><use href="#mon" x="772" y="45"/><use href="#mong" x="795" y="45"/><use href="#mon" x="822" y="45"/>
<use href="#zin" x="850" y="45"/><use href="#zou" x="872" y="45"/><use href="#fit" x="895" y="45"/><use href="#drop" x="968" y="44"/><use href="#chev" x="984" y="50"/>
<use href="#grip" x="995" y="45"/><use href="#g2" x="1010" y="45"/><use href="#sq" x="1038" y="45"/><use href="#chk" x="1060" y="45"/><use href="#chk" x="1082" y="45"/><use href="#ret" x="1104" y="45"/><use href="#drop" x="1238" y="44"/>
<path d="M1440 43H1450L1445 48Z" fill="#999"/><use href="#chev" x="1460" y="50"/>
</g>
<g stroke="#8c98ac"><path d="M94 36V54M122 36V54M383 36V54M498 36V54M637 36V54M687 36V54M759 36V54M809 36V54M837 36V54M1024 36V54M1248 36V54"/></g>
<!-- row 2 icons -->
<g>
<use href="#tr" x="14" y="73"/><use href="#pr" x="36" y="73"/><use href="#chip" x="64" y="73"/><use href="#wn" x="92" y="73"/><use href="#wn2" x="114" y="73"/><use href="#bb" x="142" y="73"/><use href="#wb" x="164" y="73"/>
<use href="#devb" x="193" y="73"/><use href="#drop" x="204" y="71"/><use href="#dt" x="221" y="73"/><use href="#dn" x="243" y="73"/><use href="#gtb" x="270" y="73"/><use href="#ep" x="298" y="73"/><use href="#ioc" x="321" y="73"/><use href="#gwr" x="348" y="73"/><use href="#eye" x="377" y="73"/><use href="#drop" x="389" y="71"/><use href="#zq" x="410" y="73"/><use href="#drop" x="424" y="71"/><use href="#chev" x="438" y="78"/>
<use href="#grip" x="449" y="73"/><use href="#gt" x="464" y="73"/><use href="#gc" x="486" y="73"/><use href="#gk" x="508" y="73"/><use href="#gm" x="529" y="73"/><use href="#chev" x="549" y="78"/>
</g>
<g stroke="#8c98ac"><path d="M49 63V82M77 63V82M128 63V82M177 63V82M256 63V82M285 63V82M335 63V82M362 63V82M397 63V82M519 63V82"/></g>
<!-- row 3 -->
<g>
<use href="#k1" x="13" y="95"/><use href="#k2" x="36" y="95"/><use href="#k3" x="58" y="95"/><use href="#k4" x="80" y="95"/><use href="#k5" x="102" y="95"/><use href="#k6" x="124" y="95"/><use href="#k7" x="152" y="95"/><use href="#k8" x="174" y="95"/><use href="#k9" x="196" y="95"/><use href="#k10" x="218" y="95"/><use href="#k11" x="246" y="95"/><use href="#k12" x="268" y="95"/><use href="#k13" x="290" y="95"/><use href="#k14" x="312" y="95"/><use href="#k15" x="340" y="95"/><use href="#k16" x="362" y="95"/><use href="#k17" x="384" y="95"/><use href="#k18" x="406" y="95"/><use href="#k19" x="434" y="95"/><use href="#k20" x="456" y="95"/><use href="#k21" x="478" y="95"/><use href="#st" x="506" y="97"/>
<text class="lb" x="13" y="107">F5</text><text class="lb" x="36" y="107">sF5</text><text class="lb" x="58" y="107">F6</text><text class="lb" x="80" y="107">sF6</text><text class="lb" x="102" y="107">F7</text><text class="lb" x="124" y="107">F8</text><text class="lb" x="152" y="107">F9</text><text class="lb" x="174" y="107">sF9</text><text class="lb" x="196" y="107">CF9</text><text class="lb" x="218" y="107" textLength="17" lengthAdjust="spacingAndGlyphs">cF10</text><text class="lb" x="246" y="107">sF7</text><text class="lb" x="268" y="107">sF8</text><text class="lb" x="290" y="107">aF7</text><text class="lb" x="312" y="107">aF8</text><text class="lb" x="340" y="107" textLength="16" lengthAdjust="spacingAndGlyphs">saF5</text><text class="lb" x="362" y="107" textLength="16" lengthAdjust="spacingAndGlyphs">saF6</text><text class="lb" x="384" y="107" textLength="16" lengthAdjust="spacingAndGlyphs">saF7</text><text class="lb" x="406" y="107" textLength="16" lengthAdjust="spacingAndGlyphs">saF8</text><text class="lb" x="434" y="107">aF5</text><text class="lb" x="456" y="107" textLength="16" lengthAdjust="spacingAndGlyphs">caF5</text><text class="lb" x="478" y="107" textLength="17" lengthAdjust="spacingAndGlyphs">caF10</text>
<use href="#pen" x="531" y="97"/><use href="#pen2" x="556" y="97"/><use href="#pen2" x="578" y="97"/><use href="#pen3" x="606" y="97"/><use href="#pen3" x="633" y="97"/>
<use href="#gp" x="662" y="97"/><use href="#gd" x="684" y="97"/><use href="#gs" x="706" y="97"/><use href="#gs" x="728" y="97"/><use href="#gl" x="750" y="97"/><use href="#gl" x="772" y="97"/>
<use href="#bl" x="800" y="96"/><use href="#blp" x="822" y="97"/><use href="#sr1" x="844" y="97"/><use href="#sr2" x="866" y="97"/><use href="#dz" x="888" y="97"/><use href="#dp" x="910" y="97"/><use href="#ga" x="932" y="97"/><use href="#gb" x="954" y="97"/><use href="#gc2" x="976" y="97"/><use href="#gd2" x="998" y="97"/><use href="#ge" x="1020" y="97"/><use href="#gf" x="1042" y="97"/><use href="#pc1" x="1070" y="97"/><use href="#pc2" x="1092" y="97"/><use href="#chev" x="1110" y="104"/>
</g>
<g stroke="#8c98ac"><path d="M139 90V106M232 90V106M326 90V106M420 90V106M493 90V106M591 90V106M620 90V106M647 90V106M785 90V106M1056 90V106"/></g>
<!-- tabs icons -->
<use href="#lb" x="220" y="122"/><use href="#tabp" x="441" y="122"/><use href="#lb" x="650" y="122"/><use href="#tabp" x="870" y="122"/><use href="#lb" x="1063" y="122"/><use href="#tabp" x="1282" y="122"/>
<path d="M1323 116L1318 121 1323 126ZM1333 116L1338 121 1333 126ZM1345 116H1353V118H1345ZM1345 120H1353L1349 124Z" fill="#e8ecf4"/>
<path d="M172 115H180M174 115V122H178V115M171 122H181M176 122V128" stroke="#e8ecf4" fill="none"/>
<path d="M189 116L197 124M197 116L189 124" stroke="#e8ecf4" stroke-width="1.500"/>
<!-- nav tool icons -->
<rect x="4" y="143" width="7" height="5" fill="#fff" stroke="#222"/><path d="M7 148V154M11 151H18" stroke="#222"/><rect x="11" y="147" width="6" height="11" fill="#fff" stroke="#222"/><path d="M14 148V156" stroke="#e01010" stroke-width="1.500"/><path d="M20 148H25L22.500 151Z" fill="#333"/>
<rect x="38" y="142" width="7" height="5" fill="#fff" stroke="#222"/><path d="M44 148H52M44 152H52M44 148V152" stroke="#222" fill="none"/>
<circle cx="73" cy="149" r="5" fill="none" stroke="#333" stroke-width="3"/><circle cx="73" cy="149" r="7" fill="none" stroke="#333" stroke-width="2" stroke-dasharray="3 2.500"/>
<path d="M31 139V160M59 139V160M86 139V160" stroke="#8c98ac"/>
<use href="#drop" x="182" y="149"/>
<path d="M188 175H196L192 171Z" fill="#333"/>
<path d="M189 462H195M189 464H195M189 466H195M189 468H195" stroke="#777"/>
<!-- left tree icons -->
<g transform="translate(0 1)">
<use href="#prj" x="8" y="173"/><use href="#mod" x="20" y="194"/>
<use href="#mn" x="3" y="215"/><use href="#pgf" x="21" y="215"/>
<use href="#bk" x="35" y="236"/><use href="#mn" x="16" y="257"/><use href="#bk" x="35" y="257"/>
<use href="#mn" x="30" y="278"/><use href="#pc2" x="49" y="278"/>
<use href="#mn" x="44" y="299"/><use href="#pf" x="63" y="299"/>
<use href="#lb" x="77" y="320"/><use href="#pd" x="77" y="341"/>
<use href="#mn" x="44" y="362"/><use href="#pf" x="63" y="362"/>
<use href="#lb" x="77" y="383"/><use href="#pd" x="77" y="404"/>
<use href="#pl" x="44" y="425"/><use href="#pf" x="63" y="425"/><use href="#pl" x="44" y="446"/><use href="#pf" x="63" y="446"/><use href="#pl" x="44" y="467"/><use href="#pf" x="63" y="467"/><use href="#pl" x="44" y="488"/><use href="#pf" x="63" y="488"/><use href="#pl" x="44" y="509"/><use href="#pf" x="63" y="509"/><use href="#pl" x="44" y="530"/><use href="#pf" x="63" y="530"/><use href="#pl" x="44" y="551"/><use href="#pf" x="63" y="551"/><use href="#pl" x="44" y="572"/><use href="#pf" x="63" y="572"/><use href="#pl" x="44" y="593"/><use href="#pf" x="63" y="593"/>
<use href="#bk" x="35" y="614"/><use href="#bk" x="35" y="635"/><use href="#bk" x="35" y="656"/><use href="#bk" x="35" y="677"/><use href="#ufl" x="35" y="698"/>
<use href="#mn" x="3" y="719"/><use href="#fbf" x="21" y="719"/>
<use href="#pl" x="16" y="740"/><use href="#ffl" x="35" y="740"/>
<use href="#mn" x="16" y="761"/><use href="#ffg" x="35" y="761"/>
<use href="#pl" x="30" y="782"/><use href="#ffg" x="49" y="782"/>
</g>
</svg>
<!-- right pane -->
<div style="left:1361px;top:133px;width:229px;height:30px;background:#bcc8da;border-top:1px solid #8d98aa;box-sizing:border-box"></div>
<div style="left:1366px;top:136px;width:198px;height:22px;background:#fff;line-height:22px;text-indent:4px;color:#666">(部件搜索)</div>
<div style="left:1363px;top:163px;width:227px;height:632px;background:#fff;border-left:2px solid #f0b45a;border-top:2px solid #f0b45a;box-sizing:border-box"></div>
<div style="left:1367px;top:292px;width:223px;height:21px;background:#fdf3ae"></div>
<div class="b" style="left:1383px;top:168px">模块标签</div>
<div class="b" style="left:1418px;top:189px">FX5UCPU</div>
<div class="b" style="left:1421px;top:210px">1[U1]:FX5-40SSC-S</div>
<div class="b" style="left:1383px;top:231px">模块FB</div>
<div class="b" style="left:1418px;top:252px">FX5-40SSC-S</div>
<div class="g" style="top:273px">M+FX5SSC_SetPositioningD</div>
<div class="g" style="top:294px;letter-spacing:.15px">M+FX5SSC_StartPositioning_01A</div>
<div class="g" style="top:315px">M+FX5SSC_JOG_01A</div>
<div class="g" style="top:336px">M+FX5SSC_MPG_01A</div>
<div class="g" style="top:357px">M+FX5SSC_ChangeSpeed_01A</div>
<div class="g" style="top:378px">M+FX5SSC_ChangeAccDec</div>
<div class="g" style="top:399px;letter-spacing:.15px">M+FX5SSC_ChangePosition_01A</div>
<div class="g" style="top:420px">M+FX5SSC_Restart_01A</div>
<div class="g" style="top:441px">M+FX5SSC_OperateError_01A</div>
<div class="g" style="top:462px">M+FX5SSC_InitializeParameter</div>
<div class="g" style="top:483px">M+FX5SSC_WriteFlash_00A</div>
<div class="g" style="top:504px">M+FX5SSC_ChangeServoParam</div>
<div class="g" style="top:525px">M+FX5SSC_ChangeTorque</div>
<div class="g" style="top:546px">M+FX5SSC_ChangeSpeedCtrl</div>
<div class="g" style="top:567px;letter-spacing:.15px">M+FX5SSC_ChangePosition_01A</div>
<div class="g" style="top:588px">M+FX5SSC_ChangeContinuous</div>
<div class="g" style="top:609px">M+FX5SSC_Sync_01A</div>
<div class="g" style="top:630px">M+FX5SSC_ChangeSyncEncoder</div>
<div class="g" style="top:651px">M+FX5SSC_DisableSyncEncoder</div>
<div class="g" style="top:672px">M+FX5SSC_EnableSyncEncoder</div>
<div class="g" style="top:693px">M+FX5SSC_ResetSyncEncoder</div>
<div class="g" style="top:714px">M+FX5SSC_ConnectSyncEncoder</div>
<div class="g" style="top:735px">M+FX5SSC_MoveCamReference</div>
<div class="g" style="top:756px">M+FX5SSC_ChangeCamPosition</div>
<div class="g" style="top:777px">M+FX5SSC_ChangeMainShaft</div>
<svg width="1590" height="923" viewBox="0 0 1590 923">
<use href="#bb" x="1577" y="147" opacity=".45"/>
<use href="#mn" x="1373" y="176"/><use href="#yf" x="1405" y="197"/><use href="#yf" x="1405" y="218"/><use href="#mn" x="1373" y="239"/><use href="#mn" x="1387" y="260"/><use href="#yf" x="1405" y="260"/>
<use href="#gr" x="1421" y="281"/><use href="#gr" x="1421" y="302"/><use href="#gr" x="1421" y="323"/><use href="#gr" x="1421" y="344"/><use href="#gr" x="1421" y="365"/><use href="#gr" x="1421" y="386"/><use href="#gr" x="1421" y="407"/><use href="#gr" x="1421" y="428"/><use href="#gr" x="1421" y="449"/><use href="#gr" x="1421" y="470"/><use href="#gr" x="1421" y="491"/><use href="#gr" x="1421" y="512"/><use href="#gr" x="1421" y="533"/><use href="#gr" x="1421" y="554"/><use href="#gr" x="1421" y="575"/><use href="#gr" x="1421" y="596"/><use href="#gr" x="1421" y="617"/><use href="#gr" x="1421" y="638"/><use href="#gr" x="1421" y="659"/><use href="#gr" x="1421" y="680"/><use href="#gr" x="1421" y="701"/><use href="#gr" x="1421" y="722"/><use href="#gr" x="1421" y="743"/><use href="#gr" x="1421" y="764"/><use href="#gr" x="1421" y="785"/>
</svg>
<!-- output pane -->
<div style="left:0;top:794px;width:1590px;height:129px;background:#fff"></div>
<div style="left:0;top:794px;width:1590px;height:1px;background:#1e2e4e"></div>
<div style="left:0;top:795px;width:1590px;height:1px;background:#fff"></div>
<div style="left:0;top:796px;width:1590px;height:1px;background:#1e2e4e"></div>
<div style="left:0;top:797px;width:1590px;height:25px;background:linear-gradient(#52658a,#3f5577)"></div>
<div style="left:0;top:822px;width:1590px;height:1px;background:#808080"></div>
<div style="left:0;top:823px;width:1590px;height:27px;background:#bdc9da;border-bottom:1px solid #9a9a9a;box-sizing:content-box"></div>
<div class="t" style="left:0;top:803px;width:20px;overflow:hidden;direction:rtl">输出</div>
<div style="left:3px;top:829px;color:#222">全部转换(重新分配)</div>
<div class="sel" style="left:117px;top:825px;width:65px;height:23px"></div>
<div class="sel" style="left:188px;top:825px;width:84px;height:23px"></div>
<div class="sel" style="left:278px;top:825px;width:93px;height:23px"></div>
<div style="left:138px;top:829px;font-size:13px;color:#222">Error:1</div>
<div style="left:209px;top:829px;font-size:13px;color:#222">Warning:0</div>
<div style="left:299px;top:829px;font-size:13px;color:#222">Information</div>
<div style="left:0;top:852px;width:1590px;height:22px;background:linear-gradient(#fff 0,#fff 4px,#f3f4f6 8px);border-bottom:1px solid #d8d8d8;box-sizing:border-box"></div>
<div style="left:0;top:874px;width:1590px;height:19px;background:#c8c8c8"></div>
<div class="h" style="left:5px">No.</div><div class="h" style="left:36px">结果</div><div class="h" style="left:75px">数据名</div><div class="h" style="left:149px">分类</div><div class="h" style="left:208px">内容</div>
<div class="w" style="left:21px">1</div><div class="w" style="left:36px">Error</div><div class="w" style="left:75px;letter-spacing:-.2px">AcarManaul</div><div class="w" style="left:148px">转换程序</div>
<div class="w" style="left:208px">程序的标签所需的局部标签区域容量不足。请确认CPU参数的软元件/标签存储器区域设置，并增加标签区域容量。或请将标签分配设置为重新分配，并执行全部转换。优化存储器使用量，可能会解决问题。</div>
<svg width="1590" height="923" viewBox="0 0 1590 923">
<path d="M113.500 827V847M184.500 827V847M275.500 827V847M374.500 827V847" stroke="#9aa6b8"/>
<path d="M29.500 853V873M68.500 853V873M141.500 853V873M201.500 853V873" stroke="#fff" stroke-width="2"/>
<circle cx="128" cy="836.500" r="7.500" fill="#c8303a" stroke="#8a1a20"/><path d="M124.500 833L131.500 840M131.500 833L124.500 840" stroke="#fff" stroke-width="2"/>
<path d="M198 829L205.500 843H190.500Z" fill="#f0c020" stroke="#806000"/><path d="M198 833V839M198 840V842" stroke="#222" stroke-width="1.500"/>
<use href="#help" x="289" y="836"/>
<rect x="383" y="832" width="9" height="8" fill="#30d8f0" stroke="#444"/><rect x="381" y="841" width="13" height="2" fill="#f090c0"/><use href="#drop" x="403" y="836"/>
<g opacity=".55" fill="#ccc" stroke="#666"><path d="M419 832H427V841H421L416 838Z"/><path d="M437 832H445L449 836 445 841H437Z"/><path d="M459 833H466V840H459Z"/><path d="M461 833L471 843M471 833L461 843"/></g>
</svg>
</body></html>
